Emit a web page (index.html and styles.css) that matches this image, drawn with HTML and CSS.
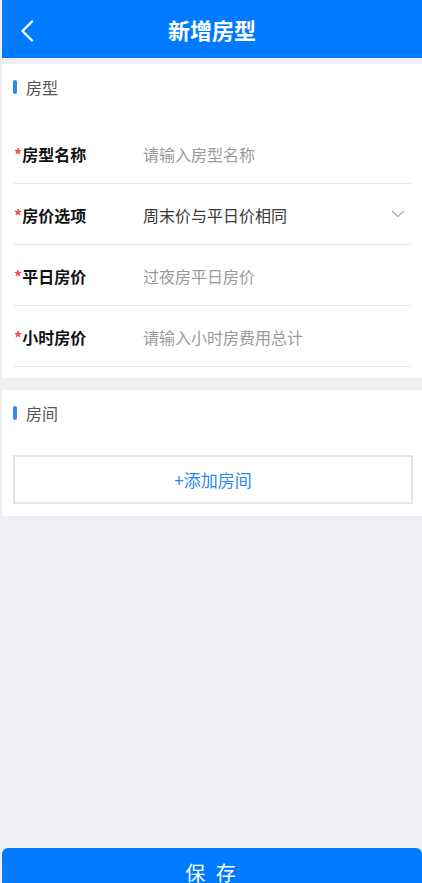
FILE: index.html
```html
<!DOCTYPE html>
<html lang="zh-CN">
<head>
    <meta charset="UTF-8">
    <meta name="viewport" content="width=device-width, initial-scale=1.0">
    <title>新增房型</title>
    <link rel="stylesheet" href="styles.css">
</head>
<body>
    <div class="page">
        <header class="nav-bar">
            <button class="back-btn" aria-label="返回">
                <svg width="16" height="24" viewBox="0 0 16 24">
                    <polyline points="12,2.5 2.5,12 12,21.5" fill="none" stroke="#fff" stroke-width="2.4" stroke-linecap="round" stroke-linejoin="round"/>
                </svg>
            </button>
            <h1>新增房型</h1>
        </header>

        <div class="content">
            <section class="card">
                <div class="section-title"><span class="bar"></span>房型</div>
                <div class="form-row">
                    <label class="label"><span class="req">*</span>房型名称</label>
                    <input class="field" type="text" placeholder="请输入房型名称">
                </div>
                <div class="form-row">
                    <label class="label"><span class="req">*</span>房价选项</label>
                    <div class="field select">周末价与平日价相同</div>
                    <svg class="arrow" width="14" height="8" viewBox="0 0 14 8">
                        <polyline points="1,1 7,6.5 13,1" fill="none" stroke="#a8a8a8" stroke-width="1.2"/>
                    </svg>
                </div>
                <div class="form-row">
                    <label class="label"><span class="req">*</span>平日房价</label>
                    <input class="field" type="text" placeholder="过夜房平日房价">
                </div>
                <div class="form-row">
                    <label class="label"><span class="req">*</span>小时房价</label>
                    <input class="field" type="text" placeholder="请输入小时房费用总计">
                </div>
            </section>

            <section class="card rooms">
                <div class="section-title"><span class="bar"></span>房间</div>
                <button class="add-btn">+添加房间</button>
            </section>
        </div>

        <div class="footer">
            <button class="save-btn">保 存</button>
        </div>
    </div>
</body>
</html>
```

FILE: styles.css
```css
body {
    margin: 0;
    background-color: #efeff4;
    font-family: "Noto Sans CJK SC", "Noto Sans", sans-serif;
}
.page {
    display: flex;
    flex-direction: column;
    height: 883px;
    overflow: hidden;
    padding-left: 2px;
}
.nav-bar {
    position: relative;
    height: 58px;
    background-color: #007aff;
    display: flex;
    align-items: center;
    justify-content: center;
    flex-shrink: 0;
}
.nav-bar h1 {
    margin: 0;
    color: #fff;
    font-size: 22px;
    font-weight: 700;
    line-height: 1;
    margin-top: -1px;
}
.back-btn {
    position: absolute;
    left: 18px;
    top: 19px;
    padding: 0;
    border: none;
    background: none;
    display: flex;
}
.content {
    flex: 1;
    min-height: 0;
    padding-top: 6px;
}
.card {
    background-color: #fff;
    padding-bottom: 11px;
    margin-bottom: 12px;
}
.section-title {
    display: flex;
    align-items: center;
    height: 20px;
    padding: 13px 0 26px 11px;
    font-size: 16px;
    color: #555;
}
.bar {
    width: 4px;
    height: 14px;
    border-radius: 2px;
    background-color: #2f86ff;
    margin-right: 9px;
}
.form-row {
    display: flex;
    align-items: center;
    height: 61px;
    box-sizing: border-box;
    padding-top: 2px;
    margin: 0 11px 0 12px;
    border-bottom: 1px solid #e6e8ea;
}
.label {
    width: 129px;
    flex-shrink: 0;
    font-size: 16px;
    font-weight: 700;
    color: #111;
}
.req {
    color: #ee4f4f;
    font-weight: 700;
}
.field {
    flex: 1;
    border: none;
    outline: none;
    padding: 0;
    font-family: inherit;
    font-size: 16px;
    color: #333;
    background: transparent;
}
.field::placeholder {
    color: #9a9a9a;
}
.select {
    color: #3a3a3a;
}
.arrow {
    margin-right: 6px;
    margin-top: -2px;
}
.rooms {
    padding-bottom: 12px;
}
.add-btn {
    display: block;
    width: calc(100% - 20px);
    height: 49px;
    margin: 6px 9px 0 11px;
    border: 2px solid #e4e4e4;
    background-color: #fff;
    color: #2a8af0;
    font-family: inherit;
    font-size: 17px;
}
.footer {
    flex: 0 0 35px;
    min-height: 0;
}
.save-btn {
    display: block;
    width: 100%;
    height: 48px;
    border: none;
    border-radius: 6px 6px 0 0;
    background-color: #007aff;
    color: #fff;
    font-family: inherit;
    font-size: 20px;
    letter-spacing: 3px;
}
```
